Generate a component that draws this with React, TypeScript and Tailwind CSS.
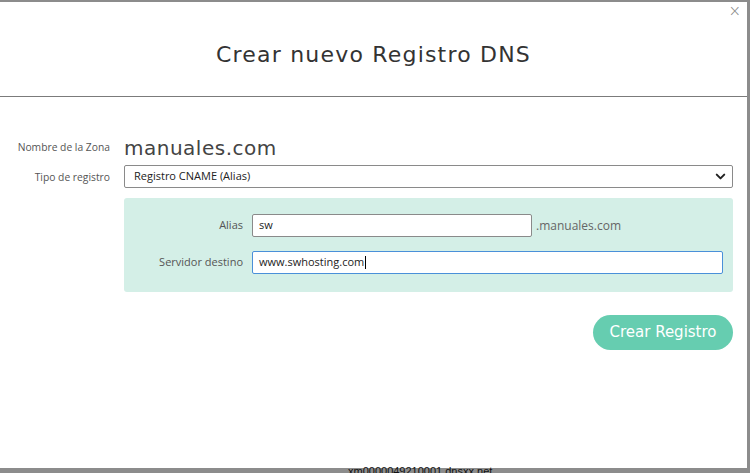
import { ChevronDown } from "lucide-react";

const label = "text-[10.3px] text-[#555] text-right font-['Open_Sans',sans-serif]";
const panelLabel = "text-[11px] text-[#555] text-right font-['Open_Sans',sans-serif]";

const App = () => (
  <div className="relative w-[750px] h-[473px] overflow-hidden bg-[#8c8c8c] pt-[2px]">
    <div className="relative w-[747px] h-[466px] bg-white">
      <button className="absolute right-[6px] top-[2px] text-[15px] leading-none text-[#888] font-['DejaVu_Sans',sans-serif] font-extralight">
        ×
      </button>

      <header className="h-[95px] border-b border-[#7b7b7b] flex justify-center pt-[39px]">
        <h1 className="text-[22px] leading-[28px] text-[#333] font-['DejaVu_Sans',sans-serif] tracking-[1.2px]">
          Crear nuevo Registro DNS
        </h1>
      </header>

      <div className="pt-[38px] pr-[14px]">
        <div className="grid grid-cols-[110px_1fr] gap-x-[14px] items-center">
          <span className={label}>Nombre de la Zona</span>
          <span className="text-[20px] leading-[26px] text-[#444] font-['DejaVu_Sans',sans-serif] tracking-[0.5px]">manuales.com</span>

          <span className={`${label} mt-[4px] self-start pt-[5px]`}>Tipo de registro</span>
          <div className="mt-[4px] h-[23px] border border-[#8a8a8a] rounded-[2px] flex items-center justify-between pl-[9px] pr-[4px]">
            <span className="text-[11px] text-[#222] font-['Open_Sans',sans-serif]">Registro CNAME (Alias)</span>
            <ChevronDown size={15} strokeWidth={3.2} className="text-[#222]" />
          </div>

          <div />
          <div className="mt-[10px] h-[94px] bg-[#d4efe7] rounded-[3px] pt-[16px]">
            <div className="grid grid-cols-[119px_1fr] gap-x-[9px] gap-y-[14px] items-center pr-[10px]">
              <span className={panelLabel}>Alias</span>
              <div className="flex items-center gap-[4px]">
                <div className="w-[280px] h-[23px] bg-white border border-[#8a8a8a] rounded-[2px] flex items-center pl-[6px] text-[11px] text-[#222] font-['Open_Sans',sans-serif]">
                  sw
                </div>
                <span className="text-[12px] text-[#666] font-['Open_Sans',sans-serif]">.manuales.com</span>
              </div>

              <span className={panelLabel}>Servidor destino</span>
              <div className="h-[23px] bg-white border border-[#4a90d9] rounded-[2px] flex items-center pl-[6px] text-[11px] text-[#222] font-['Open_Sans',sans-serif]">
                www.swhosting.com
                <span className="w-px h-[13px] bg-black ml-px" />
              </div>
            </div>
          </div>
        </div>

        <div className="flex justify-end mt-[23px]">
          <button className="w-[140px] h-[35px] rounded-full bg-[#66cdb0] text-white text-[15px] font-['DejaVu_Sans',sans-serif]">
            Crear Registro
          </button>
        </div>
      </div>
    </div>
    <div className="absolute left-[348px] top-[465px] text-[11px] leading-[13px] text-[#111] font-['Liberation_Sans',sans-serif]">
      xm0000049210001.dnsxx.net
    </div>
  </div>
);

export default App;
